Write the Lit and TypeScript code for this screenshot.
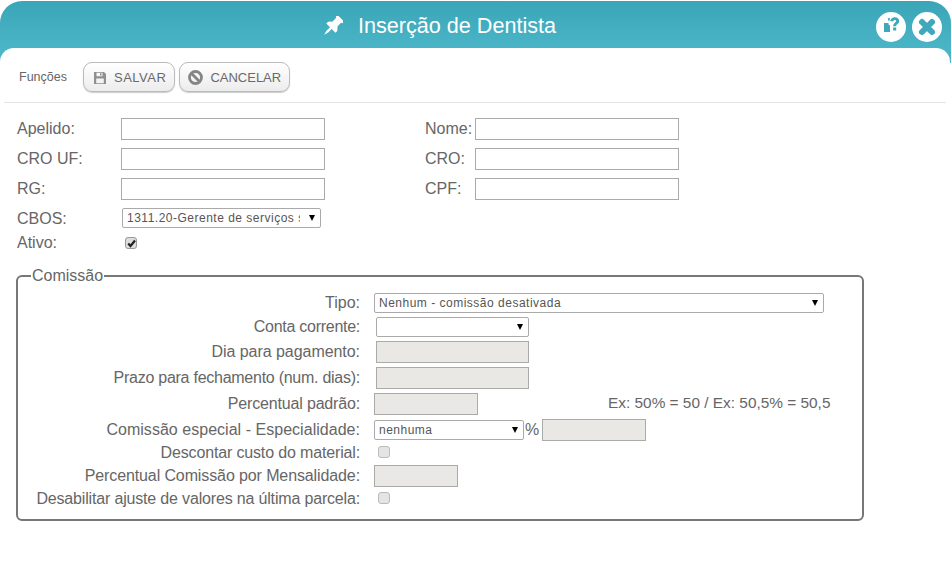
import { LitElement, html, css } from "lit";
import { customElement } from "lit/decorators.js";

const pin = html`<svg width="20" height="20" viewBox="0 0 20 20"><g transform="rotate(45 10 10) translate(0 -1)"><path fill="#fff" d="M5 0h10v2l-1.500 1v5l3 3.500V14H11.200v5L10 23.500 8.800 19v-5H3.500v-2.500l3-3.500V3L5 2z"/></g></svg>`;
const floppy = html`<svg width="15" height="15" viewBox="0 0 15 15"><path fill="#8f8f8f" fill-rule="evenodd" d="M2 2h10l2 2v10H2zM4.500 2.800v3.400h6V2.800zM4.200 8.500v4.700h7.600V8.500z"/><rect x="8" y="3.200" width="1.500" height="2.300" fill="#8f8f8f"/></svg>`;
const ban = html`<svg width="15" height="15" viewBox="0 0 15 15"><circle cx="7.500" cy="7.500" r="6" fill="none" stroke="#858585" stroke-width="2.800"/><path d="M3.300 3.300l8.400 8.400" stroke="#858585" stroke-width="2.800"/></svg>`;
const help = html`<svg width="20" height="20" viewBox="0 2 20 20"><path fill="#3fa9bb" d="M3 8h4.500v1.500l1.500 1V17H3zM6.800 3.600c.7-.5 1.300-.8 2-.8v2.500c-.5.100-1 .4-1.400.8z"/><g transform="translate(-1.400 -.7) scale(1.100)"><path fill="#3fa9bb" d="M9.600 6.200C10 4 11.700 2.700 13.800 2.700c2.300 0 4 1.400 4 3.400 0 1.500-.8 2.300-1.700 3-.8.600-1.100 1-1.100 1.800h-2.700c0-1.700.6-2.500 1.600-3.300.8-.6 1.100-.9 1.100-1.400 0-.7-.5-1.100-1.200-1.100-.8 0-1.200.6-1.300 1.500zM12.300 12h2.800v2.700h-2.800z"/></g></svg>`;
const close = html`<svg width="20" height="20" viewBox="0 0 20 20"><path d="M5 5l10 10M15 5L5 15" stroke="#3fa9bb" stroke-width="6" stroke-linecap="round"/></svg>`;

@customElement("app-root")
export class AppRoot extends LitElement {
  static styles = css`
    :host { display: block; width: 951px; height: 566px; background: #fff; overflow: hidden;
      font-family: "Liberation Sans", Arial, sans-serif; color: #666; }
    .window { padding-top: 1px; }
    .head { height: 62px; border-radius: 22px 22px 0 0; background: linear-gradient(#3aa5b6, #49b5c7 76%);
      display: flex; justify-content: center; position: relative; box-sizing: border-box; padding-top: 11px; }
    .title { display: flex; align-items: center; gap: 15px; color: #fff; font-size: 21.6px; height: 28px; margin-right: 72px; }
    .head-actions { position: absolute; right: 9px; top: 11px; display: flex; gap: 6px; }
    .round { width: 30px; height: 30px; border-radius: 50%; background: #fff; display: flex; align-items: center; justify-content: center; }
    .body { background: #fff; border-radius: 14px 14px 0 0; margin: -15px 1px 0 0; height: 518px; position: relative; }
    .tools { margin: 0 4px; height: 55px; border-bottom: 1px solid #e4e4e4; display: flex; align-items: center; gap: 4px; padding: 4px 0 0 15px; box-sizing: border-box; }
    .tools-label { font-size: 12.500px; width: 60px; }
    .btn { height: 30px; border: 1px solid #bbb; border-radius: 9px; background: linear-gradient(#fff, #ececec);
      display: flex; align-items: center; gap: 7px; padding: 0 8px; font-size: 13px; color: #6a6a6a; box-shadow: 0 1px 1px #ccc; box-sizing: border-box; }
    .wide { letter-spacing: .5px; }
    .top { display: grid; grid-template-columns: 104px 204px 100px 50px 204px; row-gap: 8px; padding: 15px 0 0 17px; align-items: center; }
    .top.second { padding-top: 2px; }
    .lab { font-size: 16px; line-height: 22px; }
    input[type="text"] { box-sizing: border-box; height: 22px; width: 204px; border: 1px solid #aaa; background: #fff; margin: 0; padding: 0 3px; }
    input.off { background: #e9e8e4; }
    .sel { position: relative; display: block; width: fit-content; }
    .sel.cbos { margin-left: 1px; align-self: start; }
    select { appearance: none; display: block; box-sizing: border-box; height: 20px; border: 1px solid #aaa; border-radius: 2px; background: #fff; color: #555; font: 12px "Liberation Sans", Arial, sans-serif; padding: 0 20px 0 4px; margin: 0; letter-spacing: .5px; }
    .tri { position: absolute; right: 6px; top: 7px; width: 0; height: 0; border: 3.500px solid transparent; border-top: 6px solid #000; border-bottom: 0; pointer-events: none; }
    .cb { appearance: none; box-sizing: border-box; width: 12px; height: 12px; border: 1px solid #bbb; border-radius: 3px; background: #e4e4e4; margin: 0; display: block; }
    .cb.on { border-color: #999; background: #ddd; }
    .cbwrap { position: relative; width: 12px; height: 12px; margin-left: 4px; }
    .cbwrap.up { margin-top: -2px; }
    .cbwrap svg { position: absolute; left: .5px; top: .5px; }
    .cbon { height: 22px; display: flex; align-items: center; }
    fieldset { margin: 14px 0 0 16px; width: 848px; height: 253px; box-sizing: border-box; border: 2px solid #777; border-radius: 6px; padding: 9px 0 0 0; }
    legend { margin-left: 13px; padding: 0 1px; font-size: 16px; line-height: 16px; }
    .grid { display: grid; grid-template-columns: 342px 1fr; column-gap: 14px; row-gap: 4px; }
    .r { text-align: right; line-height: 20px; white-space: nowrap; align-self: center; }
    .r.short { line-height: 16px; }
    .c { display: flex; align-items: center; }
    .ex { margin: 0 0 2px 130px; font-size: 15.400px; }
    .pc { font-size: 16px; margin: 0 3px 0 1px; }
    .m2 { margin-left: 2px; }
  `;

  private sel(v: string, w: number, cls = "") {
    return html`<span class="sel ${cls}"><select style="width:${w}px"><option>${v}</option></select><span class="tri"></span></span>`;
  }
  private inp(w: number) {
    return html`<input type="text" class="off" style="width:${w}px" disabled />`;
  }
  private chk() {
    return html`<span class="cbwrap up"><input type="checkbox" class="cb" disabled /></span>`;
  }
  private lab(text: string, spacing: number, short = false) {
    return html`<span class="r lab ${short ? "short" : ""}" style="letter-spacing:${spacing}px">${text}</span>`;
  }
  render() {
    return html`<div class="window">
      <div class="head">
        <div class="title">${pin}<span>Inserção de Dentista</span></div>
        <div class="head-actions"><span class="round">${help}</span><span class="round">${close}</span></div>
      </div>
      <div class="body">
        <div class="tools">
          <span class="tools-label">Funções</span>
          <span class="btn">${floppy}<span class="wide">SALVAR</span></span>
          <span class="btn">${ban}<span>CANCELAR</span></span>
        </div>
        <div class="top">
          <span class="lab">Apelido:</span><input type="text" /><span></span><span class="lab">Nome:</span><input type="text" />
          <span class="lab">CRO UF:</span><input type="text" /><span></span><span class="lab">CRO:</span><input type="text" />
          <span class="lab">RG:</span><input type="text" /><span></span><span class="lab">CPF:</span><input type="text" />
          <span class="lab">CBOS:</span>${this.sel("1311.20-Gerente de serviços sociais", 199, "cbos")}
        </div>
        <div class="top second">
          <span class="lab">Ativo:</span>
          <span class="cbon"><span class="cbwrap"><input type="checkbox" class="cb on" checked />
            <svg width="11" height="11" viewBox="0 0 11 11"><path d="M2.200 5.500l2.300 2.500L9 2.500" fill="none" stroke="#222" stroke-width="2.200"/></svg></span></span>
        </div>
        <fieldset>
          <legend>Comissão</legend>
          <div class="grid">
            ${this.lab("Tipo:", 0)}<div class="c">${this.sel("Nenhum - comissão desativada", 450)}</div>
            ${this.lab("Conta corrente:", -0.27)}<div class="c m2">${this.sel("", 153)}</div>
            ${this.lab("Dia para pagamento:", -0.05)}<div class="c m2">${this.inp(153)}</div>
            ${this.lab("Prazo para fechamento (num. dias):", -0.26)}<div class="c m2">${this.inp(153)}</div>
            ${this.lab("Percentual padrão:", -0.17)}<div class="c">${this.inp(104)}<span class="ex">Ex: 50% = 50 / Ex: 50,5% = 50,5</span></div>
            ${this.lab("Comissão especial - Especialidade:", 0.03)}<div class="c">${this.sel("nenhuma", 150)}<span class="pc">%</span>${this.inp(104)}</div>
            ${this.lab("Descontar custo do material:", -0.15, true)}<div class="c">${this.chk()}</div>
            ${this.lab("Percentual Comissão por Mensalidade:", -0.11)}<div class="c">${this.inp(84)}</div>
            ${this.lab("Desabilitar ajuste de valores na última parcela:", -0.17, true)}<div class="c">${this.chk()}</div>
          </div>
        </fieldset>
      </div>
    </div>`;
  }
}
